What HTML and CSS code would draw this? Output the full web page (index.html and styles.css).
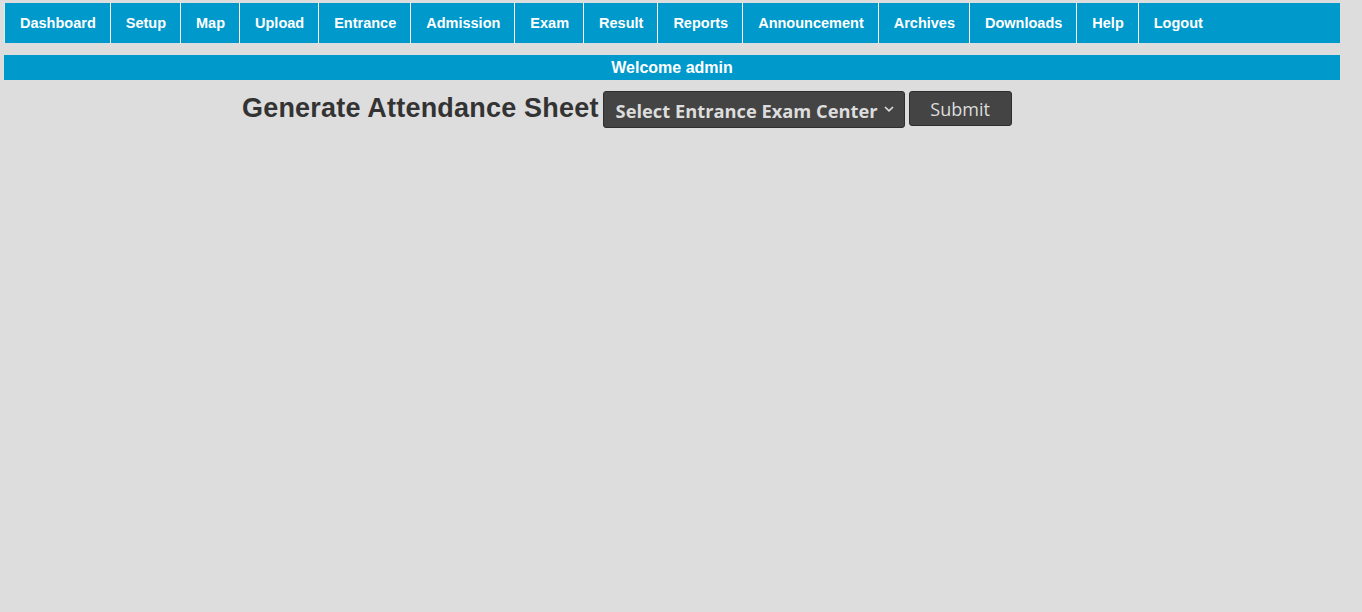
FILE: index.html
```html
<!DOCTYPE html>
<html>
<head>
<meta charset="utf-8">
<link rel="stylesheet" href="styles.css">
</head>
<body>
<div class="page">
  <ul class="nav">
    <li>Dashboard</li>
    <li>Setup</li>
    <li>Map</li>
    <li>Upload</li>
    <li>Entrance</li>
    <li>Admission</li>
    <li>Exam</li>
    <li>Result</li>
    <li>Reports</li>
    <li>Announcement</li>
    <li>Archives</li>
    <li>Downloads</li>
    <li>Help</li>
    <li class="last">Logout</li>
  </ul>
  <div class="welcome">Welcome admin</div>
  <div class="form-row">
    <h2 class="title">Generate Attendance Sheet</h2>
    <div class="select">
      <span>Select Entrance Exam Center</span>
      <svg class="chev" width="10" height="6" viewBox="0 0 10 6"><path d="M1 1 L5 4.8 L9 1" fill="none" stroke="#dddddd" stroke-width="1.7"/></svg>
    </div>
    <button class="submit">Submit</button>
  </div>
</div>
</body>
</html>
```
FILE: styles.css
```css
html, body {
  margin: 0;
  padding: 0;
  background: #dddddd;
  height: 100%;
}
body {
  font-family: "Liberation Sans", Arial, sans-serif;
}
.page {
  padding: 3px 22px 0 4px;
}
.nav {
  list-style: none;
  margin: 0;
  padding: 0;
  display: flex;
  height: 40px;
  background: #0099cc;
}
.nav li {
  color: #ffffff;
  font-weight: bold;
  font-size: 14.5px;
  line-height: 40px;
  padding: 0 14px 0 15px;
  border-left: 1px solid #ffffff;
}
.nav li:first-child {
  border-left: 1px solid #d8eef6;
}
.welcome {
  margin-top: 12px;
  height: 25px;
  line-height: 25px;
  background: #0099cc;
  color: #ffffff;
  font-weight: bold;
  font-size: 16px;
  text-align: center;
}
.form-row {
  display: flex;
  align-items: flex-start;
  margin-top: 11px;
  padding-left: 238px;
}
.title {
  margin: 0;
  font-size: 27px;
  letter-spacing: 0.2px;
  font-weight: bold;
  color: #333333;
  line-height: 34px;
}
.select {
  margin-left: 4px;
  width: 302px;
  height: 37px;
  box-sizing: border-box;
  background: #444444;
  border: 1px solid #2e2e2e;
  border-radius: 3px;
  display: flex;
  align-items: center;
  padding-left: 12px;
  font-family: "Open Sans", sans-serif;
  font-weight: bold;
  font-size: 18.3px;
  color: #dddddd;
}
.select span {
  margin-top: 2px;
}
.chev {
  margin-left: 6px;
  margin-top: -2px;
}
.submit {
  margin-left: 4px;
  width: 103px;
  height: 35px;
  box-sizing: border-box;
  background: #444444;
  border: 1px solid #2e2e2e;
  border-radius: 3px;
  font-family: "Open Sans", sans-serif;
  font-size: 18px;
  color: #dddddd;
  padding: 0;
}
```
